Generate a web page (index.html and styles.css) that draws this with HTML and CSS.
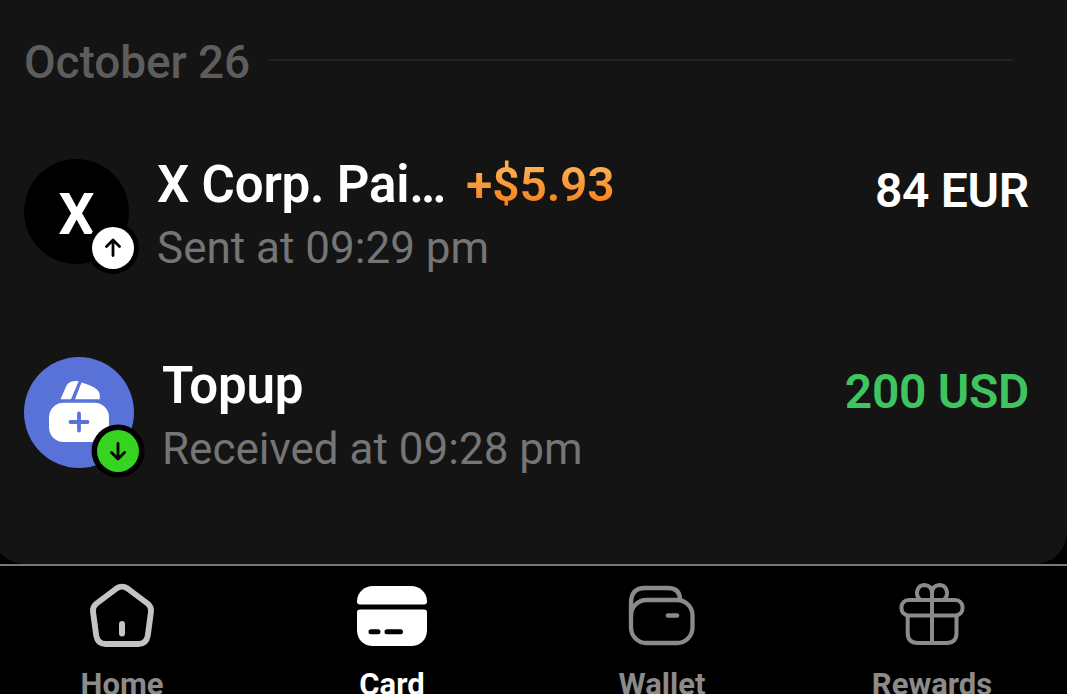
FILE: index.html
```
<!DOCTYPE html>
<html lang="en">

<head>
  <meta charset="UTF-8">
  <meta name="viewport" content="width=device-width, initial-scale=1.0">
  <title>Card</title>
  <link rel="stylesheet" href="styles.css">
</head>

<body>

  <main class="sheet">
    <header class="day">
      <h2>October 26</h2>
      <hr />
    </header>

    <div class="row">
      <div class="avatar sent">
        <span>X</span>
        <svg class="badge" width="54" height="54" viewBox="-27 -27 54 54">
          <circle r="26" fill="#000" />
          <circle r="21" fill="#fff" />
          <path d="M0 7.5V-7.5M-6.5 -1.5L0 -8L6.5 -1.5" />
        </svg>
      </div>
      <div class="info">
        <div class="title"><span class="name">X Corp. Pai…</span><span class="cashback">+$5.93</span></div>
        <div class="sub">Sent at 09:29 pm</div>
      </div>
      <div class="amount">84 EUR</div>
    </div>

    <div class="row">
      <div class="avatar topup">
        <svg width="110" height="111" viewBox="24 357 110 111">
          <path fill="#fff" d="M60.5 399.3L66 386.5C68 382.5 71 380.7 78.7 381L71 399.3Z" />
          <path fill="#fff" d="M75 399.3L81.5 382.5Q98 387 99.5 393.5Q100.2 396 99.7 399.3Z" />
          <rect x="49" y="402.7" width="60" height="39.3" rx="14.5" fill="#fff" />
          <path d="M79 413.5V430.5M70.5 422H87.500" stroke="#5872d8" stroke-width="3.8" stroke-linecap="round" />
        </svg>
        <svg class="badge" width="54" height="54" viewBox="-27 -27 54 54">
          <circle r="26.5" fill="#000" />
          <circle r="21" fill="#36d321" />
          <path d="M0 -7.5V7.5M-6.5 1.5L0 8L6.5 1.5" />
        </svg>
      </div>
      <div class="info">
        <div class="title"><span class="name">Topup</span></div>
        <div class="sub">Received at 09:28 pm</div>
      </div>
      <div class="amount received">200 USD</div>
    </div>
  </main>

  <nav class="tabs">
    <a class="tab home">
      <svg width="80" height="70" viewBox="82 580 80 70">
        <path d="M116.5 588.5Q122 584.8 127.5 588.5L147.5 603.5Q151.5 606.5 151 611.5L147.8 635.5Q146.3 644 138.5 644H105.5Q97.7 644 96.2 635.5L93 611.5Q92.5 606.5 96.5 603.5Z" stroke-width="5.8" />
        <path d="M122 624V633.5" stroke-width="6" />
      </svg>
      <span>Home</span>
    </a>
    <a class="tab card">
      <svg width="80" height="70" viewBox="352 580 80 70">
        <path fill="#fff" d="M357 601.5C357 592.5 364 586 373 586H411C420 586 427 592.5 427 601.5Q427 604.5 424 604.5H360Q357 604.5 357 601.5Z" />
        <path fill="#fff" d="M360 609.5H424Q427 609.5 427 612.5V630C427 640 420 646 411 646H373C364 646 357 640 357 630V612.5Q357 609.5 360 609.5Z" />
        <path d="M371 631.7H378M387 631.7H400.5" stroke="#000" stroke-width="5" />
      </svg>
      <span>Card</span>
    </a>
    <a class="tab">
      <svg width="80" height="70" viewBox="622 580 80 70">
        <rect x="631" y="600" width="61.5" height="43" rx="15.5" stroke-width="4.3" />
        <path d="M631 616V603Q631 588 645 588H668C676 588 680 592 680 600" stroke-width="4.3" />
        <path d="M668 615.5H677" stroke-width="4.6" />
      </svg>
      <span>Wallet</span>
    </a>
    <a class="tab">
      <svg width="80" height="70" viewBox="892 580 80 70">
        <rect x="901.5" y="600" width="61" height="15.5" rx="7" stroke-width="4" />
        <path d="M907.7 616V633Q907.7 643 918 643H946.5Q956.5 643 956.5 633V616" stroke-width="4" />
        <path d="M932 592V643" stroke-width="4" />
        <path d="M920 599.5C914.5 595 917 585 924.5 585Q932 585.5 932 593.5Q932 585.5 939.5 585C947 585 949.5 595 944 599.5" stroke-width="4" />
      </svg>
      <span>Rewards</span>
    </a>
  </nav>

</body>

</html>
```
FILE: styles.css
```
  * {
    box-sizing: border-box;
  }

  body {
    margin: 0;
    height: 694px;
    overflow: hidden;
    background: #000;
    color: #fff;
    font-family: Roboto, sans-serif;
  }

  .sheet {
    height: 564px;
    margin-left: -9px;
    padding: 35px 38px 0 33px;
    background: #141414;
    border-radius: 0 0 32px 34px;
  }

  .day {
    display: flex;
    height: 119px;
    padding-right: 16px;
    gap: 19px;
  }

  .day h2 {
    margin: 0;
    font-size: 46px;
    font-weight: 500;
    line-height: 54px;
    letter-spacing: -0.1px;
    color: #5d5d5d;
  }

  .day hr {
    flex: 1;
    height: 2px;
    margin: 24px 0 0;
    border: none;
    background: #222;
  }

  .row {
    display: flex;
    align-items: flex-start;
    height: 201px;
  }

  .avatar {
    position: relative;
    flex: none;
    border-radius: 50%;
  }

  .avatar.sent {
    width: 105px;
    height: 105px;
    margin: 5px 28px 0 0;
    background: #000;
    text-align: center;
    font-size: 57px;
    font-weight: 700;
    line-height: 111px;
  }

  .avatar.topup {
    width: 110px;
    height: 111px;
    margin: 2px 28px 0 0;
    background: #5872d8;
  }

  .badge {
    position: absolute;
    right: -11px;
    bottom: -11px;
    fill: none;
    stroke-linecap: round;
    stroke-linejoin: round;
  }

  .topup .badge {
    bottom: -10px;
  }

  .badge path {
    stroke: #000;
    stroke-width: 2.8;
  }

  .info {
    flex: 1;
    white-space: nowrap;
  }

  .title {
    display: flex;
    gap: 20px;
    padding-top: 1px;
    font-size: 51px;
    font-weight: 600;
    line-height: 60px;
    letter-spacing: -0.2px;
  }

  .cashback {
    font-size: 48px;
    background: linear-gradient(#ffae50 20%, #f5821f 80%);
    background-clip: text;
    -webkit-background-clip: text;
    color: transparent;
  }

  .sub {
    margin-top: 5px;
    font-size: 44px;
    line-height: 56px;
    color: #757575;
  }

  .amount {
    padding-top: 9px;
    font-size: 48px;
    font-weight: 600;
    line-height: 56px;
    letter-spacing: -0.3px;
  }

  .received {
    color: #3fc55f;
  }

  .tabs {
    display: grid;
    grid-template-columns: repeat(4, 270px);
    width: 1080px;
    height: 130px;
    margin-left: -13px;
    border-top: 2px solid #777;
  }

  .tab {
    display: flex;
    flex-direction: column;
    align-items: center;
    padding-top: 14px;
    font-size: 31px;
    font-weight: 700;
    line-height: 36px;
    color: #8b8b8b;
  }

  .tab svg {
    flex: none;
    fill: none;
    stroke: currentColor;
    stroke-linecap: round;
    stroke-linejoin: round;
    margin-bottom: 17px;
  }

  .tab.home svg {
    stroke: #c4c4c4;
  }

  .tab.card {
    color: #fff;
  }

  .tab.card path[fill] {
    stroke: none;
  }
```
